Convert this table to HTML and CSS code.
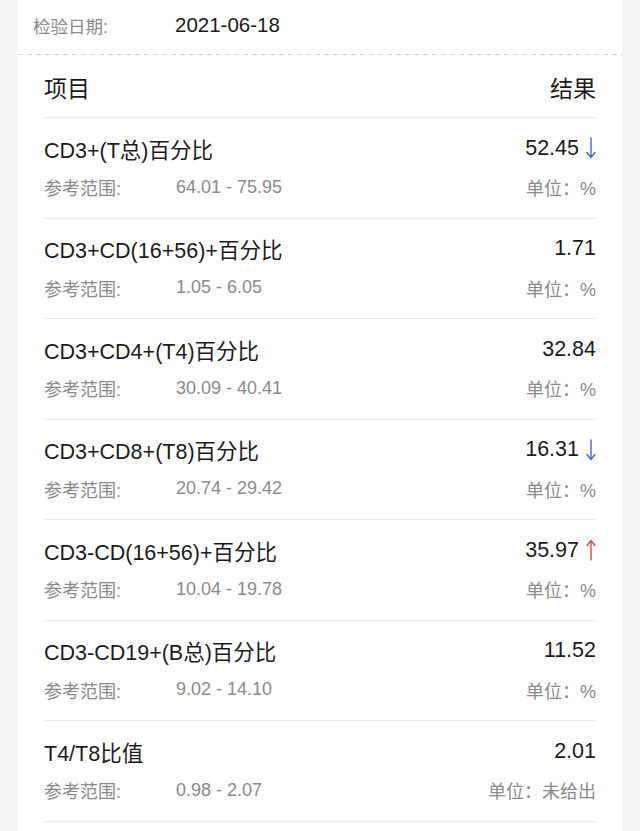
FILE: index.html
```html
<!DOCTYPE html>
<html lang="zh-CN">
<head>
<meta charset="utf-8">
<title>检验报告</title>
<link rel="stylesheet" href="styles.css">
</head>
<body>
<div class="card">
  <div class="date-row">
    <span class="date-label">检验日期:</span>
    <span class="date-value">2021-06-18</span>
  </div>
  <div class="list">
    <div class="head">
      <span>项目</span>
      <span>结果</span>
    </div>

    <div class="row">
      <div class="line main">
        <span class="name">CD3+(T总)百分比</span>
        <span class="val">52.45<svg class="arrow down" viewBox="0 0 10 22" width="10" height="22"><path d="M5 1V20M1 15.5L5 20.5L9 15.5"/></svg></span>
      </div>
      <div class="line sub">
        <span class="ref"><span class="lbl">参考范围:</span><span class="range">64.01 - 75.95</span></span>
        <span class="unit">单位：%</span>
      </div>
    </div>

    <div class="row">
      <div class="line main">
        <span class="name">CD3+CD(16+56)+百分比</span>
        <span class="val">1.71</span>
      </div>
      <div class="line sub">
        <span class="ref"><span class="lbl">参考范围:</span><span class="range">1.05 - 6.05</span></span>
        <span class="unit">单位：%</span>
      </div>
    </div>

    <div class="row">
      <div class="line main">
        <span class="name">CD3+CD4+(T4)百分比</span>
        <span class="val">32.84</span>
      </div>
      <div class="line sub">
        <span class="ref"><span class="lbl">参考范围:</span><span class="range">30.09 - 40.41</span></span>
        <span class="unit">单位：%</span>
      </div>
    </div>

    <div class="row">
      <div class="line main">
        <span class="name">CD3+CD8+(T8)百分比</span>
        <span class="val">16.31<svg class="arrow down" viewBox="0 0 10 22" width="10" height="22"><path d="M5 1V20M1 15.5L5 20.5L9 15.5"/></svg></span>
      </div>
      <div class="line sub">
        <span class="ref"><span class="lbl">参考范围:</span><span class="range">20.74 - 29.42</span></span>
        <span class="unit">单位：%</span>
      </div>
    </div>

    <div class="row">
      <div class="line main">
        <span class="name">CD3-CD(16+56)+百分比</span>
        <span class="val">35.97<svg class="arrow up" viewBox="0 0 10 22" width="10" height="22"><path d="M5 21V2M1 6.5L5 1.5L9 6.5"/></svg></span>
      </div>
      <div class="line sub">
        <span class="ref"><span class="lbl">参考范围:</span><span class="range">10.04 - 19.78</span></span>
        <span class="unit">单位：%</span>
      </div>
    </div>

    <div class="row">
      <div class="line main">
        <span class="name">CD3-CD19+(B总)百分比</span>
        <span class="val">11.52</span>
      </div>
      <div class="line sub">
        <span class="ref"><span class="lbl">参考范围:</span><span class="range">9.02 - 14.10</span></span>
        <span class="unit">单位：%</span>
      </div>
    </div>

    <div class="row">
      <div class="line main">
        <span class="name">T4/T8比值</span>
        <span class="val">2.01</span>
      </div>
      <div class="line sub">
        <span class="ref"><span class="lbl">参考范围:</span><span class="range">0.98 - 2.07</span></span>
        <span class="unit">单位：未给出</span>
      </div>
    </div>

    <div class="row last">
      <div class="line main">
        <span class="ref"><span class="lbl big">报告医师:</span><span class="doctor">徐轩峰</span></span>
      </div>
    </div>
  </div>
</div>
</body>
</html>
```
FILE: styles.css
```css
html, body {
  margin: 0;
  padding: 0;
  height: 831px;
  overflow: hidden;
}
body {
  background: #f4f4f4;
  font-family: "Liberation Sans", Arial, "Noto Sans CJK SC", sans-serif;
  color: #1b1b1b;
}
.card {
  margin: 0 18px;
  background: #fff;
  min-height: 900px;
}
.date-row {
  height: 55px;
  display: flex;
  align-items: center;
  padding-left: 15px;
  padding-bottom: 5px;
  box-sizing: border-box;
  background-image: repeating-linear-gradient(to right, #d2d2d2 0 5px, transparent 5px 9px);
  background-size: 100% 1px;
  background-position: left bottom;
  background-repeat: no-repeat;
}
.date-label {
  width: 142px;
  font-size: 17.5px;
  color: #8a8a8a;
}
.date-value {
  font-size: 20.5px;
  color: #1b1b1b;
}
.list {
  padding: 0 26px;
}
.head {
  height: 62px;
  display: flex;
  justify-content: space-between;
  align-items: center;
  font-size: 23px;
  padding-top: 2px;
  box-sizing: border-box;
  color: #1b1b1b;
}
.row {
  border-top: 1px solid #e9e9e9;
  padding: 16px 0 18.57px;
}
.line {
  display: flex;
  justify-content: space-between;
  align-items: center;
}
.main {
  height: 28px;
  font-size: 21.5px;
}
.sub {
  height: 24px;
  margin-top: 13px;
  font-size: 18px;
  color: #8a8a8a;
}
.ref {
  display: flex;
  align-items: center;
}
.lbl {
  width: 132px;
}
.lbl.big {
  width: 103px;
  color: #8a8a8a;
}
.doctor {
  color: #1b1b1b;
}
.val {
  display: flex;
  align-items: center;
}
.arrow {
  margin-left: 7px;
  fill: none;
  stroke-width: 1.4;
  stroke-linecap: round;
  stroke-linejoin: round;
}
.arrow.down { stroke: #3d6fc7; }
.arrow.up { stroke: #d54a4a; }
.row.last {
  padding-top: 10px;
}
```
